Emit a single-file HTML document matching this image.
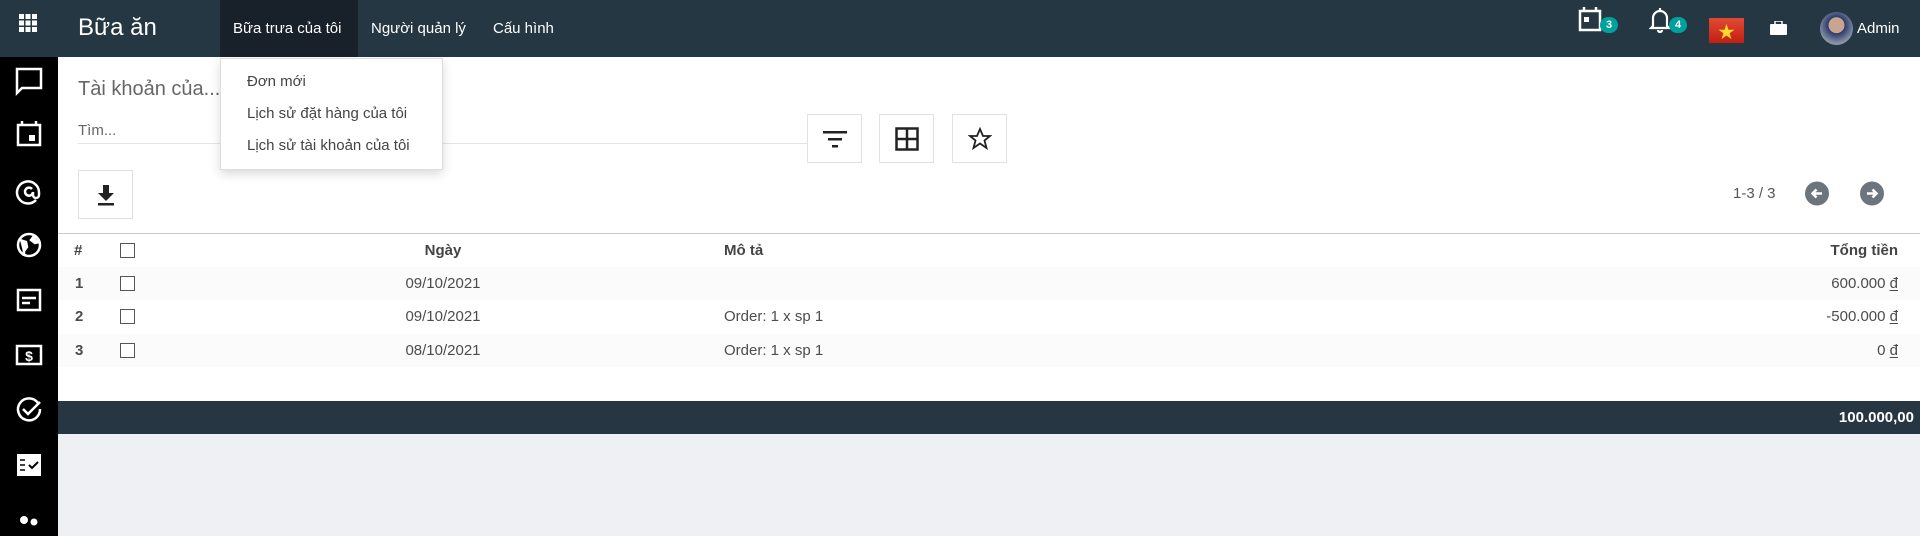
<!DOCTYPE html>
<html><head><meta charset="utf-8"><style>
*{box-sizing:border-box;margin:0;padding:0}
body{width:1920px;height:536px;overflow:hidden;background:#eef0f4;font-family:"Liberation Sans","Noto Sans CJK SC",sans-serif;color:#4c4c4c;position:relative}
.abs{position:absolute}
.nav{left:0;top:0;width:1920px;height:57px;background:#243742}
.side{left:0;top:57px;width:58px;height:479px;background:#000}
.main{left:58px;top:57px;width:1862px;height:344px;background:#fff}
.foot{left:58px;top:401px;width:1862px;height:33px;background:#263743;color:#fff;font-weight:bold;font-size:15px;text-align:right;padding-right:6px;line-height:33px}
.nt{color:#fff;font-size:15px;top:20px}
.btn{border:1px solid #dee2e6;background:#fff;width:55px;height:49px;display:flex;align-items:center;justify-content:center}
.row{left:58px;width:1862px;height:33px;font-size:15px;line-height:33px}
.cb{width:15px;height:15px;border:1.5px solid #555;top:9px;left:62px;background:#fff}
.dd{left:220px;top:58px;width:223px;height:112px;background:#fff;border:1px solid #ddd;box-shadow:0 4px 10px rgba(0,0,0,.15)}
.dd div{position:absolute;left:26px;font-size:15px;color:#444}
.badge{background:#00a09d;color:#fff;font-size:11px;font-weight:bold;border-radius:9px;width:18px;height:16px;text-align:center;line-height:16px}
u{text-underline-offset:2px}
</style></head><body>
<div class="abs nav"></div>
<svg class="abs" style="left:17px;top:13px" width="22" height="20" viewBox="0 0 22 20" fill="#fff"><rect x="2" y="1" width="5" height="5"/><rect x="8.5" y="1" width="5" height="5"/><rect x="15" y="1" width="5" height="5"/><rect x="2" y="7.5" width="5" height="5"/><rect x="8.5" y="7.5" width="5" height="5"/><rect x="15" y="7.5" width="5" height="5"/><rect x="2" y="14" width="5" height="5"/><rect x="8.5" y="14" width="5" height="5"/><rect x="15" y="14" width="5" height="5"/></svg>
<div class="abs" style="left:78px;top:14px;font-size:24px;color:#fff">Bữa ăn</div>
<div class="abs" style="left:220px;top:0;width:138px;height:57px;background:#18202a"></div>
<div class="abs nt" style="left:233px">Bữa trưa của tôi</div>
<div class="abs nt" style="left:371px">Người quản lý</div>
<div class="abs nt" style="left:493px">Cấu hình</div>
<svg class="abs" style="left:1578px;top:6px" width="26" height="26" viewBox="0 0 26 26" fill="none" stroke="#fff" stroke-width="2.5"><rect x="2" y="5" width="20" height="19"/><line x1="6" y1="1" x2="6" y2="6"/><line x1="18" y1="1" x2="18" y2="6"/><rect x="6" y="11" width="5" height="5" fill="#fff" stroke="none"/></svg>
<div class="abs badge" style="left:1600px;top:17px">3</div>
<svg class="abs" style="left:1649px;top:7px" width="22" height="26" viewBox="0 0 22 26" fill="none" stroke="#fff" stroke-width="2.2"><path d="M4 19V11a7 7 0 0 1 14 0v8l2 2H2z"/><path d="M9 23a2 2 0 0 0 4 0"/><line x1="11" y1="1" x2="11" y2="4"/></svg>
<div class="abs badge" style="left:1669px;top:17px">4</div>
<div class="abs" style="left:1709px;top:18px;width:35px;height:25px;background:linear-gradient(#e04a35,#c41e10);display:flex;align-items:center;justify-content:center;color:#ffd92a;font-size:17px">★</div>
<svg class="abs" style="left:1770px;top:21px" width="17" height="14" viewBox="0 0 17 14" fill="#fff"><rect x="0" y="3" width="17" height="11" rx="1"/><rect x="5" y="0" width="7" height="4" fill="none" stroke="#fff" stroke-width="1.5"/></svg>
<div class="abs" style="left:1820px;top:12px;width:33px;height:33px;border-radius:50%;background:radial-gradient(circle at 50% 40%,#c9a58f 0 30%,#2b3a6a 32%,#8a93a8 70%)"></div>
<div class="abs nt" style="left:1857px">Admin</div>

<div class="abs side"></div>
<svg class="abs" style="left:0;top:57px" width="58" height="479" viewBox="0 57 58 479" fill="none" stroke="#fff" stroke-width="2.5">
<path d="M17 69h24v19H22l-5 5z"/>
<rect x="18" y="125" width="22" height="20"/><line x1="22" y1="121" x2="22" y2="126"/><line x1="36" y1="121" x2="36" y2="126"/><rect x="29" y="135" width="6" height="6" fill="#fff" stroke="none"/>
<path d="M36 200a11 11 0 1 1 3-8v3a3 3 0 0 1-6 0v-3a4 4 0 1 1-1-3"/>
<circle cx="29" cy="245" r="11"/><path d="M20 240l6 2 1 5-3 4v5M34 236l-3 4 4 3 4-1" fill="#fff"/>
<rect x="18" y="290" width="22" height="20"/><line x1="22" y1="298" x2="36" y2="298"/><line x1="22" y1="303" x2="30" y2="303"/>
<rect x="17" y="346" width="24" height="18"/><text x="29" y="361" fill="#fff" stroke="none" font-size="14" font-weight="bold" text-anchor="middle" font-family="Liberation Sans">$</text>
<path d="M38 403a11 11 0 1 0 2 6"/><path d="M23 409l5 5 12-12"/>
<rect x="17" y="454" width="24" height="22" fill="#fff" stroke="none"/><path d="M20 460h5M20 465h5M20 470h5" stroke="#000" stroke-width="1.5"/><path d="M29 465l3 3 6-6" stroke="#000" stroke-width="2"/>
<circle cx="24" cy="520" r="4" fill="#fff" stroke="none"/><circle cx="34" cy="522" r="3.5" fill="#fff" stroke="none"/>
</svg>

<div class="abs main"></div>
<div class="abs" style="left:78px;top:78px;font-size:20px;color:#666">Tài khoản của...</div>
<div class="abs" style="left:78px;top:122px;font-size:15px;color:#666">Tìm...</div>
<div class="abs" style="left:78px;top:143px;width:729px;height:1px;background:#e4e4e4"></div>
<div class="abs btn" style="left:807px;top:114px"><svg width="24" height="18" viewBox="0 0 24 18" fill="#222"><rect x="0" y="1" width="24" height="2.5"/><rect x="5" y="8" width="14" height="2.5"/><rect x="9" y="15" width="6" height="2.5"/></svg></div>
<div class="abs btn" style="left:879px;top:114px"><svg width="24" height="24" viewBox="0 0 24 24" fill="none" stroke="#222" stroke-width="2.5"><rect x="1.5" y="1.5" width="21" height="21"/><line x1="12" y1="1" x2="12" y2="23"/><line x1="1" y1="12" x2="23" y2="12"/></svg></div>
<div class="abs btn" style="left:952px;top:114px"><svg width="24" height="24" viewBox="0 0 24 24" fill="none" stroke="#222" stroke-width="1.8"><path d="M12 2l3 7h7l-5.5 4.5 2 7.5L12 16.5 5.5 21l2-7.5L2 9h7z"/></svg></div>
<div class="abs btn" style="left:78px;top:170px"><svg width="20" height="22" viewBox="0 0 20 22" fill="#222"><path d="M7 1h6v8h5l-8 8-8-8h5z"/><rect x="2" y="19" width="16" height="2.5"/></svg></div>
<div class="abs" style="left:1733px;top:185px;font-size:15px;color:#555">1-3 / 3</div>
<svg class="abs" style="left:1805px;top:181px" width="80" height="25" viewBox="0 0 80 25"><circle cx="12" cy="12.5" r="12" fill="#6c757d"/><path d="M17 12.5H8M11.5 8.5l-4 4 4 4" stroke="#fff" stroke-width="2.5" fill="none"/><circle cx="67" cy="12.5" r="12" fill="#6c757d"/><path d="M62 12.5h9M67.5 8.5l4 4-4 4" stroke="#fff" stroke-width="2.5" fill="none"/></svg>
<div class="abs" style="left:58px;top:233px;width:1862px;height:1px;background:#ccc"></div>

<div class="abs row" style="top:234px;font-weight:bold;color:#444"><span class="abs" style="left:16px">#</span><div class="abs cb"></div><span class="abs" style="left:350px;width:70px;text-align:center">Ngày</span><span class="abs" style="left:666px">Mô tả</span><span class="abs" style="right:22px">Tổng tiền</span></div>
<div class="abs row" style="top:267px;background:#fbfbfb"><span class="abs" style="left:17px;font-weight:bold">1</span><div class="abs cb"></div><span class="abs" style="left:335px;width:100px;text-align:center">09/10/2021</span><span class="abs" style="right:22px">600.000 <u>đ</u></span></div>
<div class="abs row" style="top:300px;background:#fff"><span class="abs" style="left:17px;font-weight:bold">2</span><div class="abs cb"></div><span class="abs" style="left:335px;width:100px;text-align:center">09/10/2021</span><span class="abs" style="left:666px">Order: 1 x sp 1</span><span class="abs" style="right:22px">-500.000 <u>đ</u></span></div>
<div class="abs row" style="top:334px;background:#fbfbfb"><span class="abs" style="left:17px;font-weight:bold">3</span><div class="abs cb"></div><span class="abs" style="left:335px;width:100px;text-align:center">08/10/2021</span><span class="abs" style="left:666px">Order: 1 x sp 1</span><span class="abs" style="right:22px">0 <u>đ</u></span></div>
<div class="abs foot">100.000,00</div>

<div class="abs dd"><div style="top:14px">Đơn mới</div><div style="top:46px">Lịch sử đặt hàng của tôi</div><div style="top:78px">Lịch sử tài khoản của tôi</div></div>
</body></html>
